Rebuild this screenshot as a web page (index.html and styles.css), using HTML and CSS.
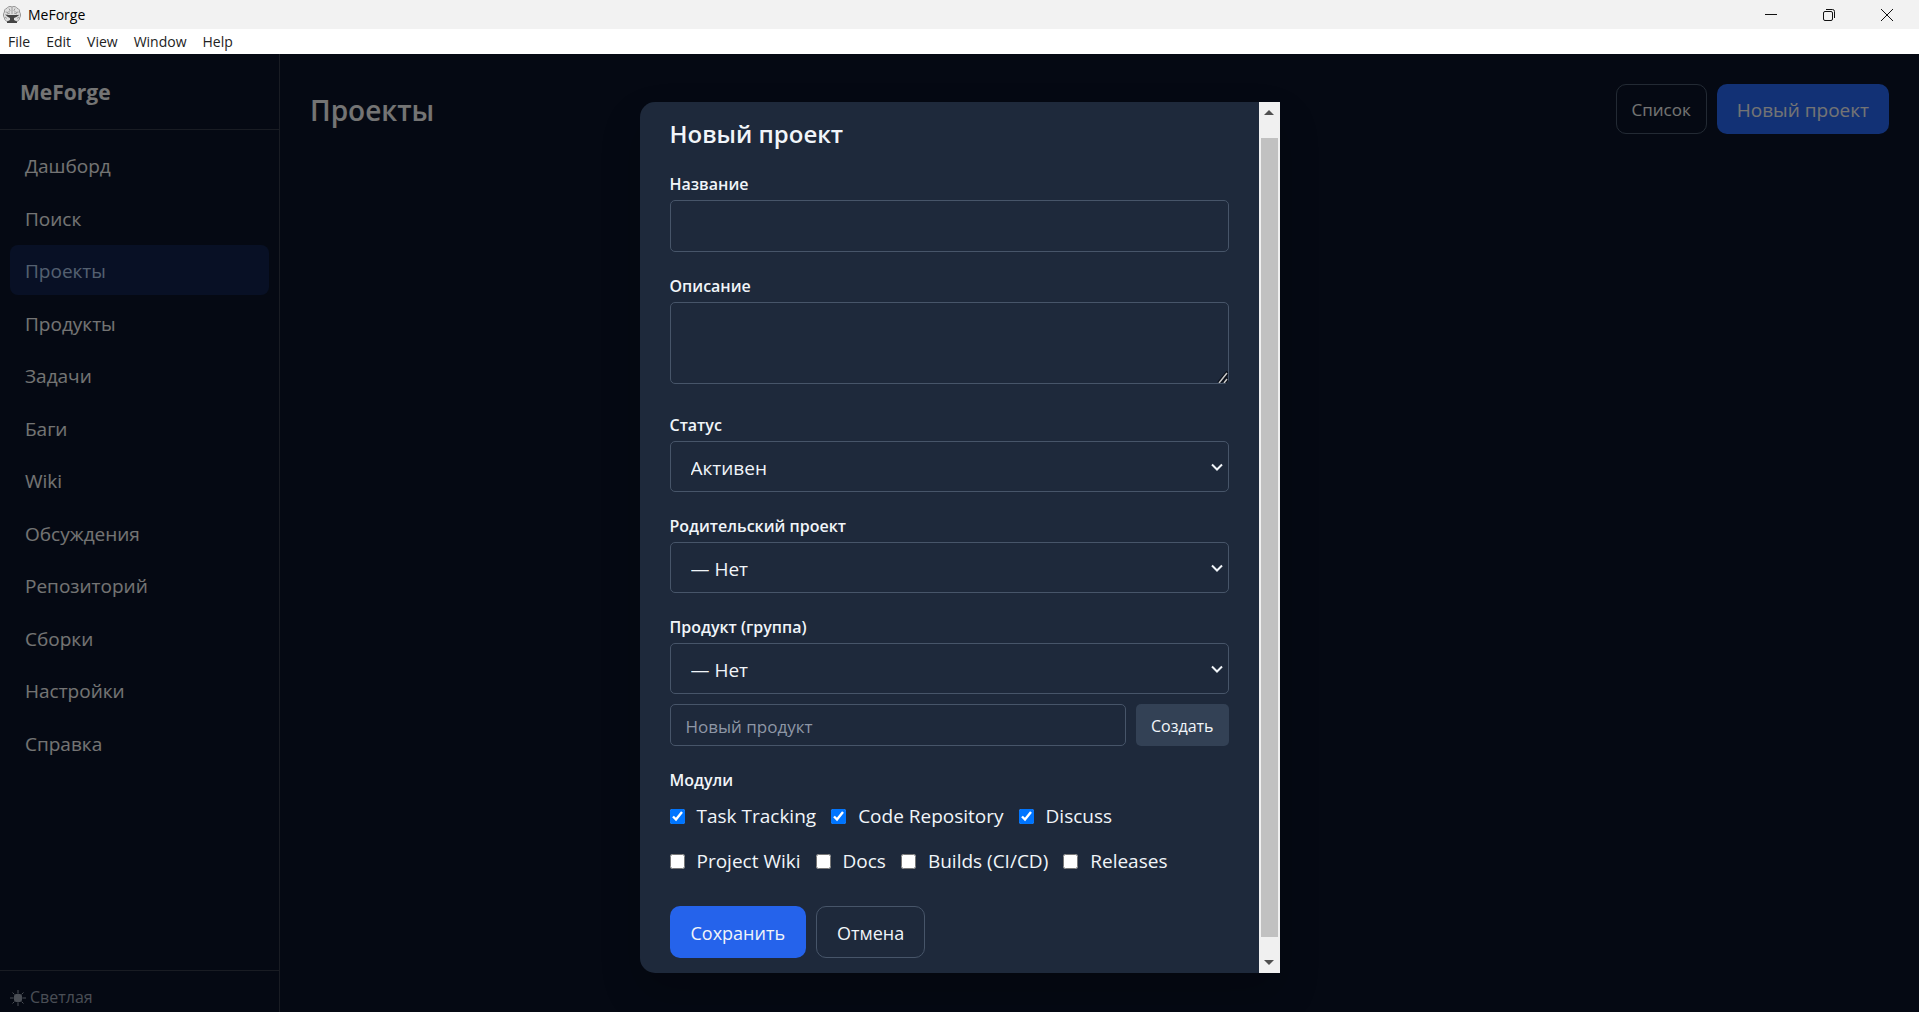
FILE: index.html
```html
<!DOCTYPE html>
<html lang="ru">
<head>
<meta charset="utf-8">
<title>MeForge</title>
<link rel="stylesheet" href="styles.css">
</head>
<body>
<div class="window">
  <header class="titlebar">
    <svg class="app-icon" viewBox="0 0 18 18" aria-hidden="true">
      <path d="M8.500 .7C6.500 0 4.500 1 4 2.200 2 2.700 1 4.500 1.500 6 0 7.500 0 10.500 1.500 12c0 2 1.500 3.500 3.500 3.500h8c2 0 3.500-1.500 3.500-3.500 1.500-1.500 1.500-4.500 0-6 .5-1.500-.5-3.300-2.500-3.800C13.500 1 11.500 0 9.500 .7z" fill="#dedede" stroke="#959595"/>
      <path d="M9 1v7M6 2.500l1 2-2 2M12 2.500l-1 2 2 2M2.500 6l2.500.5M15.500 6l-2.500.5M4 12.500L2 11M14 12.500l2-1.500M7 7l-3 1M11 7l3 1" fill="none" stroke="#8a8a8a" stroke-width=".8"/>
      <path d="M2 8.500l3.500.5h9l2-.3-3 2.300-2.500 1v2l3 1.500V17H4v-1.500L7 14v-2l-2-1z" fill="#444"/>
    </svg>
    <span class="app-title">MeForge</span>
    <div class="window-controls">
      <button type="button" aria-label="Minimize"><svg viewBox="0 0 12 12"><path d="M0 5.500h12"/></svg></button>
      <button type="button" aria-label="Restore"><svg viewBox="0 0 12 12"><rect x=".5" y="2.500" width="9" height="9" rx="1.500"/><path d="M3 .5h6.500a2 2 0 0 1 2 2V9"/></svg></button>
      <button type="button" aria-label="Close"><svg viewBox="0 0 12 12"><path d="M0 0l12 12M12 0L0 12"/></svg></button>
    </div>
  </header>
  <div class="menubar" role="menubar">
    <button type="button" role="menuitem">File</button>
    <button type="button" role="menuitem">Edit</button>
    <button type="button" role="menuitem">View</button>
    <button type="button" role="menuitem">Window</button>
    <button type="button" role="menuitem">Help</button>
  </div>
  <div class="app">
    <aside class="sidebar">
      <div class="brand">MeForge</div>
      <nav class="nav">
        <a href="#">Дашборд</a>
        <a href="#">Поиск</a>
        <a href="#" class="active">Проекты</a>
        <a href="#">Продукты</a>
        <a href="#">Задачи</a>
        <a href="#">Баги</a>
        <a href="#">Wiki</a>
        <a href="#">Обсуждения</a>
        <a href="#">Репозиторий</a>
        <a href="#">Сборки</a>
        <a href="#">Настройки</a>
        <a href="#">Справка</a>
      </nav>
      <div class="sidebar-footer">
        <button type="button" class="theme-toggle">
          <svg viewBox="0 0 16 16" aria-hidden="true"><circle cx="8" cy="8" r="4"/><path d="M8 0v3M8 13v3M0 8h3M13 8h3M2.500 2.500l2 2M11.500 11.500l2 2M2.500 13.500l2-2M11.500 4.500l2-2"/></svg>
          Светлая
        </button>
      </div>
    </aside>
    <main class="main">
      <div class="page-head">
        <h1>Проекты</h1>
        <div class="page-actions">
          <button type="button" class="btn btn-outline btn-small">Список</button>
          <button type="button" class="btn btn-primary">Новый проект</button>
        </div>
      </div>
    </main>
    <div class="overlay">
      <div class="modal" role="dialog" aria-labelledby="modal-title">
        <form class="modal-body">
          <h2 id="modal-title">Новый проект</h2>
          <div class="field">
            <label for="name">Название</label>
            <input type="text" id="name">
          </div>
          <div class="field field-area">
            <label for="description">Описание</label>
            <textarea id="description"></textarea>
          </div>
          <div class="field">
            <label for="status">Статус</label>
            <select id="status"><option>Активен</option></select>
          </div>
          <div class="field">
            <label for="parent">Родительский проект</label>
            <select id="parent"><option>— Нет</option></select>
          </div>
          <div class="field">
            <label for="product">Продукт (группа)</label>
            <select id="product"><option>— Нет</option></select>
            <div class="inline-create">
              <input type="text" placeholder="Новый продукт" aria-label="Новый продукт">
              <button type="button">Создать</button>
            </div>
          </div>
          <fieldset class="modules">
            <legend>Модули</legend>
            <div class="checks">
              <label><input type="checkbox" checked>Task Tracking</label>
              <label><input type="checkbox" checked>Code Repository</label>
              <label><input type="checkbox" checked>Discuss</label>
              <label><input type="checkbox">Project Wiki</label>
              <label><input type="checkbox">Docs</label>
              <label><input type="checkbox">Builds (CI/CD)</label>
              <label><input type="checkbox">Releases</label>
            </div>
          </fieldset>
          <div class="form-actions">
            <button type="button" class="btn btn-primary">Сохранить</button>
            <button type="button" class="btn btn-outline">Отмена</button>
          </div>
        </form>
        <div class="scrollbar" aria-hidden="true">
          <span class="arrow arrow-up"></span>
          <span class="thumb"></span>
          <span class="arrow arrow-down"></span>
        </div>
      </div>
    </div>
  </div>
</div>
</body>
</html>
```
FILE: styles.css
```css
* {
  box-sizing: border-box;
}

body {
  margin: 0;
  font-family: "Open Sans", "Noto Sans", sans-serif;
  font-size: 19px;
  line-height: 30px;
  color: #f1f5f9;
}

button,
input,
select,
textarea {
  margin: 0;
  font: inherit;
  color: inherit;
}

.window {
  display: flex;
  flex-direction: column;
  height: 100vh;
  overflow: hidden;
}

/* Window frame */
.titlebar {
  display: flex;
  align-items: center;
  flex: none;
  height: 29px;
  padding: 0 3px;
  background: #f2f2f2;
  color: #000;
  font-size: 14px;
}

.app-icon {
  width: 18px;
  height: 18px;
}

.app-title {
  margin-left: 7px;
}

.window-controls {
  display: flex;
  margin-left: auto;
}

.window-controls button {
  display: flex;
  align-items: center;
  justify-content: center;
  width: 58px;
  height: 28px;
  padding: 0;
  border: 0;
  background: none;
}

.window-controls svg {
  width: 12px;
  height: 12px;
  fill: none;
  stroke: #111;
}

.menubar {
  display: flex;
  flex: none;
  height: 25px;
  background: #fff;
}

.menubar button {
  padding: 0 8px;
  border: 0;
  background: none;
  color: #222;
  font-size: 14px;
  line-height: 25px;
}

/* Application */
.app {
  position: relative;
  display: flex;
  flex: 1;
  min-height: 0;
  background: #0a1326;
  color: #e8e8e8;
}

.sidebar {
  display: flex;
  flex-direction: column;
  flex: none;
  width: 280px;
  border-right: 1px solid #333947;
}

.brand {
  padding: 21px 20px 19px;
  border-bottom: 1px solid #333947;
  font-size: 21px;
  font-weight: 700;
  line-height: 35px;
}

.nav {
  display: flex;
  flex-direction: column;
  flex: 1;
  padding: 10px;
}

.nav a {
  margin-bottom: 2px;
  padding: 11px 15px 9px;
  border-radius: 8px;
  color: inherit;
  text-decoration: none;
}

.nav a:nth-child(odd) {
  margin-bottom: 3px;
}

.nav a.active {
  background: #10214a;
  color: #a9c0e0;
}

.sidebar-footer {
  padding: 11px 10px 0;
  border-top: 1px solid #333947;
}

.theme-toggle {
  display: flex;
  align-items: center;
  gap: 4px;
  padding: 1px 0 0;
  border: 0;
  background: none;
  color: #949cab;
  font-size: 16px;
  line-height: 29px;
}

.theme-toggle svg {
  width: 16px;
  height: 16px;
  fill: currentColor;
  stroke: currentColor;
}

.main {
  flex: 1;
  padding: 30px;
}

.page-head {
  display: flex;
  align-items: flex-start;
  justify-content: space-between;
}

h1 {
  margin: 0;
  font-size: 28px;
  font-weight: 600;
  line-height: 52px;
}

.page-actions,
.form-actions {
  display: flex;
  gap: 10px;
}

.btn {
  padding: 11px 20px 9px;
  border: 1px solid transparent;
  border-radius: 10px;
  line-height: 30px;
}

.btn-primary {
  background: #2563eb;
}

.btn-outline {
  border-color: #475569;
  background: none;
}

.page-actions .btn {
  padding: 10px 19px 8px;
}

.page-actions .btn-small {
  padding: 10px 15px 8px;
  font-size: 17px;
}

.form-actions .btn {
  font-size: 18px;
}

/* Dialog */
.overlay {
  position: absolute;
  inset: 0;
  display: flex;
  align-items: flex-start;
  justify-content: center;
  padding-top: 48px;
  background: rgba(0, 0, 0, 0.5);
}

.modal {
  display: flex;
  width: 640px;
  overflow: hidden;
  border-radius: 15px 0 0 15px;
  background: #1e293b;
  box-shadow: 0 20px 40px rgba(0, 0, 0, 0.2);
  color: #f1f5f9;
}

.modal-body {
  flex: 1;
  padding: 15px 30px;
}

h2 {
  margin: 0 0 20px;
  font-size: 24px;
  font-weight: 600;
  line-height: 33px;
}

.field {
  display: flex;
  flex-direction: column;
  margin-bottom: 20px;
}

.field-area {
  margin-bottom: 27px;
}

.field label,
.modules legend {
  padding: 1px 0 0;
  font-size: 16px;
  font-weight: 600;
  line-height: 26px;
}

.field > label {
  margin-bottom: 3px;
}

.field input,
.field select,
.field textarea {
  width: 100%;
  padding: 10px 15px;
  border: 1px solid #475569;
  border-radius: 5px;
  background: #1e293b;
}

.field textarea {
  display: block;
  height: 82px;
}

.field textarea::-webkit-resizer {
  background: url("data:image/svg+xml,%3Csvg xmlns='http://www.w3.org/2000/svg' width='12' height='12'%3E%3Cpath d='M3 12L12 1M8 12l4-5' stroke='%230b101a' stroke-width='4'/%3E%3Cpath d='M3 12L11 2M8 12l3-4' stroke='%23c8c8c8' stroke-width='1.500'/%3E%3C/svg%3E") no-repeat right bottom;
}

.field select {
  height: 51px;
  padding: 10px 20px 8px;
  appearance: none;
  background: #1e293b url("data:image/svg+xml,%3Csvg xmlns='http://www.w3.org/2000/svg' width='12' height='8'%3E%3Cpath d='M1 1.500l5 5 5-5' fill='none' stroke='%23f1f5f9' stroke-width='2'/%3E%3C/svg%3E") no-repeat right 5px center;
}

.inline-create {
  display: flex;
  gap: 10px;
  margin-top: 10px;
}

.field .inline-create input {
  flex: 1;
  min-width: 0;
  height: 42px;
  padding: 6px 15px 4px;
  font-size: 17px;
}

.inline-create input::placeholder {
  color: #8e97a6;
}

.inline-create button {
  padding: 7px 15px 5px;
  border: 0;
  border-radius: 5px;
  background: #334155;
  font-size: 16px;
}

.modules {
  margin: 0;
  padding: 0;
  border: 0;
}

.checks {
  display: flex;
  flex-wrap: wrap;
  gap: 15px;
  margin-top: 8px;
}

.checks label {
  display: flex;
  align-items: center;
  gap: 12px;
}

.checks input {
  width: 15px;
  height: 15px;
}

.form-actions {
  margin-top: 30px;
}

/* Scrollbar of the dialog */
.scrollbar {
  display: flex;
  flex-direction: column;
  align-items: center;
  width: 21px;
  background: #f0f0f0;
}

.arrow {
  display: flex;
  align-items: center;
  justify-content: center;
  width: 21px;
  height: 21px;
}

.arrow::before {
  content: "";
  border: 5px solid transparent;
  border-top: 0;
  border-bottom-color: #505050;
}

.arrow-down::before {
  border-top: 5px solid #505050;
  border-bottom: 0;
}

.thumb {
  flex: 1;
  width: 17px;
  margin: 15px 0;
  background: #c1c1c1;
}
```
